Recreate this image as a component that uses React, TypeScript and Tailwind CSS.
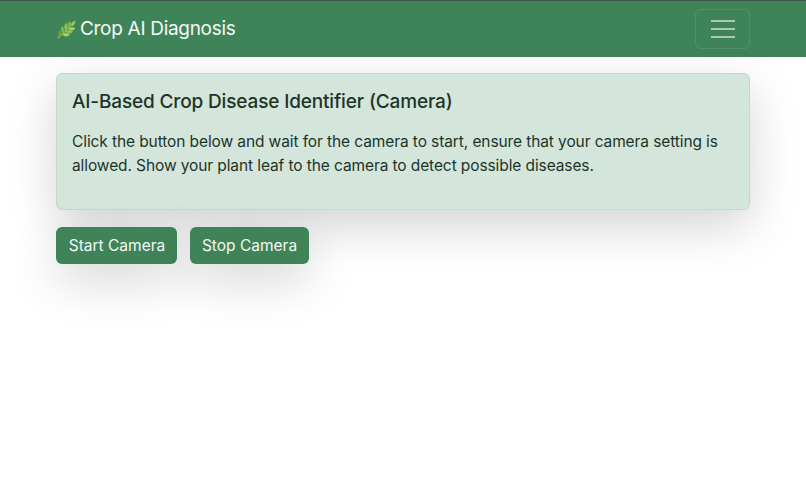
function HerbIcon() {
  return (
    <svg width="20" height="20" viewBox="0 0 20 20" className="mr-[4px] shrink-0" strokeWidth="0.9" strokeLinejoin="round">
      <path d="M2 18C6 14.5 10 10.5 16 4" fill="none" stroke="#8dbb55" strokeWidth="1.4" />
      <path d="M16 3C17 2 18 1.5 19 1C19 3 18 5 16 6C15.5 5 15.5 4 16 3Z" fill="#9ccb5f" stroke="#9ccb5f" />
      <path d="M12.5 7C11.5 5 12 3 13.5 1.5C15 3 15 5.5 13.5 7.5Z" fill="#7fb548" stroke="#7fb548" />
      <path d="M9.5 10C8.3 8 8.5 5.5 10 3.5C11.5 5.5 11.5 8 10.3 10Z" fill="#8fc254" stroke="#8fc254" />
      <path d="M6.5 13C5 11 5 8.5 6.3 6.5C8 8.5 8.2 11 7.2 13Z" fill="#7fb548" stroke="#7fb548" />
      <path d="M13 8.5C15 7.3 17 7.5 19 8.5C17.5 10.3 15 10.5 13.3 9.5Z" fill="#a6d16a" stroke="#a6d16a" />
      <path d="M10.3 11.3C12.3 10.2 14.7 10.4 16.5 11.7C15 13.5 12.3 13.5 10.6 12.3Z" fill="#8fc254" stroke="#8fc254" />
      <path d="M7.3 14.2C9.3 13 11.7 13.4 13.3 14.8C11.7 16.4 9.3 16.3 7.6 15.2Z" fill="#a6d16a" stroke="#a6d16a" />
      <path d="M3.5 16.5C2.5 14.8 2.5 12.8 3.5 11C5 12.6 5.2 14.8 4.3 16.5Z" fill="#6ea63f" stroke="#6ea63f" />
    </svg>
  );
}

export default function App() {
  return (
    <div className="min-h-[499px] bg-white font-['Inter','Liberation_Sans',sans-serif] overflow-hidden">
      {/* Navbar */}
      <nav className="h-[57px] bg-[#3f8458] border-t border-[#3c5548] flex items-center justify-between px-[56px]">
        <a className="flex items-center pt-[1px] text-[19px] text-[#f4f8f5] tracking-[-0.3px]">
          <HerbIcon />
          Crop AI Diagnosis
        </a>
        <button className="w-[55px] h-[40px] rounded-[6px] border border-white/10 flex flex-col items-center justify-center gap-[6px]">
          <span className="block w-[24px] h-[2px] bg-white/55" />
          <span className="block w-[24px] h-[2px] bg-white/55" />
          <span className="block w-[24px] h-[2px] bg-white/55" />
        </button>
      </nav>

      <main className="px-[56px] pt-[16px]">
        {/* Info card */}
        <div className="h-[137px] rounded-[6px] border border-[#c2d9cb] bg-[#d4e5dc] px-[15px] pt-[15px] text-[#1c3527] shadow-[0_16px_48px_rgba(0,0,0,0.175)]">
          <h4 className="text-[19px] leading-[26px] font-medium tracking-[-0.15px]">
            AI-Based Crop Disease Identifier (Camera)
          </h4>
          <p className="mt-[15px] text-[15.5px] leading-[24px] tracking-[-0.1px]">
            Click the button below and wait for the camera to start, ensure that your camera setting is allowed. Show your plant leaf to the camera to detect possible diseases.
          </p>
        </div>

        {/* Actions */}
        <div className="flex gap-[13px] mt-[17px]">
          <button className="w-[121px] h-[37px] rounded-[6px] bg-[#3f8458] pl-[1px] text-[#f4f8f5] text-[15.5px] shadow-[0_16px_48px_rgba(0,0,0,0.175)]">
            Start Camera
          </button>
          <button className="w-[119px] h-[37px] rounded-[6px] bg-[#3f8458] text-[#f4f8f5] text-[15.5px] shadow-[0_16px_48px_rgba(0,0,0,0.175)]">
            Stop Camera
          </button>
        </div>
      </main>
    </div>
  );
}
